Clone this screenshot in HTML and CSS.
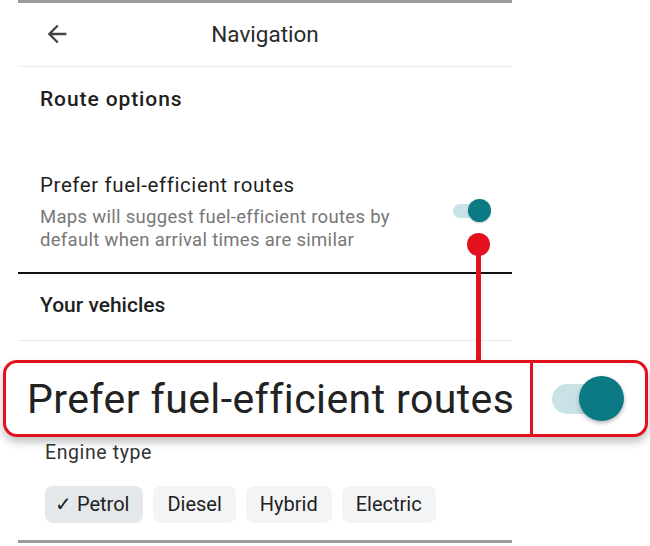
FILE: index.html
```html
<!DOCTYPE html>
<html lang="en">
<head>
  <meta charset="UTF-8">
  <title>Navigation settings</title>
  <link rel="stylesheet" href="styles.css">
</head>
<body>
  <div class="page">
    <div class="screen">
      <div class="topbar">
        <span class="back">
          <svg width="28" height="28" viewBox="0 0 24 24"><path d="M20 11H7.83l5.59-5.59L12 4l-8 8 8 8 1.41-1.41L7.83 13H20v-2z" fill="#444"/></svg>
        </span>
        <span class="title">Navigation</span>
        <span></span>
      </div>

      <h3 class="section">Route options</h3>

      <div class="setting">
        <div class="setting-text">
          <div class="setting-title">Prefer fuel-efficient routes</div>
          <div class="setting-sub">Maps will suggest fuel-efficient routes by default when arrival times are similar</div>
        </div>
        <div class="toggle small"><span class="knob"></span></div>
      </div>

      <h3 class="section vehicles">Your vehicles</h3>

      <div class="hidden-row"></div>

      <div class="engine">
        <div class="engine-label">Engine type</div>
        <div class="chips">
          <span class="chip selected">✓ Petrol</span>
          <span class="chip">Diesel</span>
          <span class="chip">Hybrid</span>
          <span class="chip">Electric</span>
        </div>
      </div>
    </div>

    <!-- annotation over the screenshot -->
    <span class="pin-dot"></span>
    <span class="pin-line"></span>
    <div class="callout">
      <div class="callout-text">Prefer fuel-efficient routes</div>
      <div class="callout-switch">
        <div class="toggle big"><span class="knob"></span></div>
      </div>
    </div>
  </div>
</body>
</html>
```

FILE: styles.css
```css
body {
  margin: 0;
  background: #fff;
  font-family: Roboto, "Liberation Sans", Arial, sans-serif;
  color: #202124;
}

.page {
  position: relative;
  width: 650px;
  height: 546px;
  overflow: hidden;
}

.screen {
  margin-left: 18px;
  width: 494px;
  border-top: 3px solid #9a9a9a;
}

.topbar {
  height: 61px;
  padding-bottom: 2px;
  display: grid;
  grid-template-columns: 1fr auto 1fr;
  align-items: center;
  border-bottom: 1px solid #ececec;
}
.back { padding-left: 25px; display: flex; }
.title { font-size: 22.5px; color: #2a2a2a; }

.section {
  margin: 0;
  padding: 18px 0 0 22px;
  font-size: 21px;
  line-height: 28px;
  font-weight: 500;
  letter-spacing: 0.9px;
  color: #1f1f1f;
}

.setting {
  display: flex;
  align-items: center;
  padding: 60px 21px 20px 22px;
  border-bottom: 2px solid #111;
}
.setting-text { flex: 1; }
.setting-title { font-size: 20.5px; line-height: 24px; letter-spacing: 0.6px; color: #1f1f1f; }
.setting-sub {
  margin-top: 8.5px;
  width: 365px;
  font-size: 18.5px;
  line-height: 23px;
  letter-spacing: 0.3px;
  color: #777;
}

.vehicles {
  padding-top: 17px;
  padding-bottom: 21px;
  letter-spacing: 0;
  border-bottom: 1px solid #ececec;
}

.hidden-row { height: 100px; }

.engine { padding: 0 0 17px 27px; border-bottom: 3px solid #9a9a9a; }
.engine-label { font-size: 19.5px; line-height: 24px; letter-spacing: 0.6px; color: #333; }
.chips { display: flex; gap: 10px; margin-top: 21px; }
.chip {
  height: 37px;
  padding: 0 14px;
  display: flex;
  align-items: center;
  border-radius: 8px;
  background: #f3f4f5;
  font-size: 20px;
  color: #222;
}
.chip.selected { padding: 0 14px 0 10px; background: #e4e8eb; }

/* switches */
.toggle { position: relative; }
.toggle .knob {
  position: absolute;
  right: 0;
  border-radius: 50%;
  background: #0b7a85;
}
.toggle.small {
  width: 38px;
  height: 14px;
  margin-top: -3px;
  border-radius: 7px;
  background: #c9e2e6;
}
.toggle.small .knob { top: -4.5px; width: 23px; height: 23px; box-shadow: 0 1px 2px rgba(0, 0, 0, .2); }
.toggle.big {
  width: 50px;
  height: 30px;
  border-radius: 15px;
  background: #c9e2e6;
}
.toggle.big .knob { top: -8px; right: -22px; width: 45px; height: 45px; box-shadow: 0 2px 4px rgba(0, 0, 0, .3); }

/* annotation */
.pin-dot {
  position: absolute;
  left: 467px;
  top: 233px;
  width: 23px;
  height: 23px;
  border-radius: 50%;
  background: #e3101e;
}
.pin-line {
  position: absolute;
  left: 476px;
  top: 244px;
  width: 5px;
  height: 118px;
  background: #e3101e;
}
.callout {
  position: absolute;
  left: 3px;
  top: 360px;
  width: 639px;
  height: 71px;
  display: flex;
  border: 3px solid #e3101e;
  border-radius: 14px;
  background: #fff;
  box-shadow: 0 5px 8px rgba(0, 0, 0, .25);
}
.callout-text {
  width: 503px;
  padding-left: 21px;
  display: flex;
  align-items: center;
  font-size: 41px;
  letter-spacing: 0.4px;
  color: #222;
  border-right: 3px solid #e3101e;
  white-space: nowrap;
}
.callout-switch {
  flex: 1;
  display: flex;
  align-items: center;
  padding-left: 19px;
}
```
